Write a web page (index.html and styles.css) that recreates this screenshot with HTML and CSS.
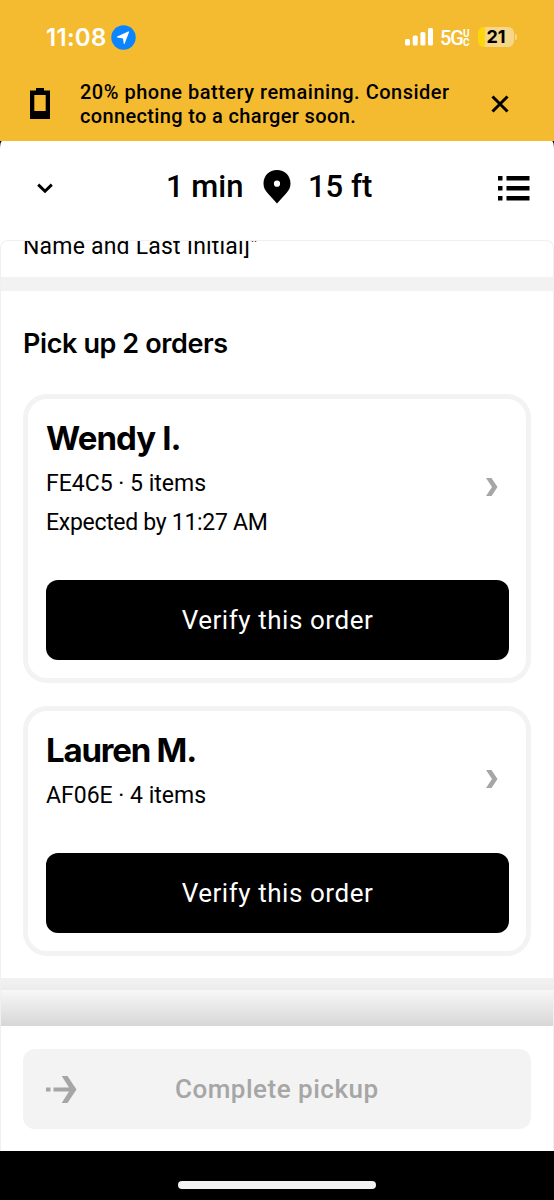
FILE: index.html
```
<!DOCTYPE html>
<html lang="en">
<head>
  <meta charset="UTF-8">
  <meta name="viewport" content="width=device-width, initial-scale=1.0">
  <title>Pick up orders</title>
  <link rel="stylesheet" href="styles.css">
</head>
<body>
  <div class="phone">
    <div class="banner">
      <div class="status-bar">
        <span class="time">11:08</span>
        <svg class="location" width="25" height="25" viewBox="0 0 25 25">
          <circle cx="12.5" cy="12.5" r="12.2" fill="#0a84ff"/>
          <path d="M18.2 6.8 L13.6 18.7 Q13.1 19.5 12.7 18.5 L12 13.4 L6.3 12.6 Q5.2 12.1 6.2 11.5 L17.2 6.6 Q18.2 6.2 18.2 6.8Z" fill="#fff"/>
        </svg>
        <svg class="signal" width="28" height="18" viewBox="0 0 28 18">
          <rect x="0" y="11" width="5" height="6.5" rx="1.5"/>
          <rect x="7.7" y="7.5" width="5" height="10" rx="1.5"/>
          <rect x="15.4" y="4" width="5" height="13.5" rx="1.5"/>
          <rect x="23" y="0" width="5" height="17.5" rx="1.5"/>
        </svg>
        <span class="network">5G</span>
        <span class="network-uc"><span>U</span><span>C</span></span>
        <span class="battery">21</span>
        <span class="battery-tip"></span>
      </div>
      <div class="alert">
        <svg class="alert-icon" width="20" height="31" viewBox="0 0 20 31">
          <path fill-rule="evenodd" d="M6 0 H14 V2.5 H20 V31 H0 V2.5 H6Z M4.3 7 V23 H15.7 V7Z"/>
        </svg>
        <p class="alert-text">20% phone battery remaining. Consider<br><span class="alert-action">connecting to a charger soon.</span></p>
        <svg class="alert-close" width="18" height="18" viewBox="0 0 18 18">
          <path d="M1.5 1.5 L16.5 16.5 M16.5 1.5 L1.5 16.5" stroke="#000" stroke-width="2.9"/>
        </svg>
      </div>
    </div>

    <div class="header-wrap">
      <div class="header">
        <svg class="chevron-down" width="16" height="11" viewBox="0 0 16 11">
          <path d="M1.2 1.6 L8 8.2 L14.8 1.6" fill="none" stroke="#000" stroke-width="2.9"/>
        </svg>
        <div class="trip">
          <span class="trip-time">1 min</span>
          <svg class="pin" width="28" height="34" viewBox="0 0 28 34">
            <path fill-rule="evenodd" d="M14 0 C21.8 0 27.5 5.8 27.5 13.5 C27.5 17.3 26 20.3 23.5 22.9 L14 33.5 L4.5 22.9 C2 20.3 .5 17.3 .5 13.5 C.5 5.8 6.2 0 14 0Z M14 10.6 A3.1 3.1 0 1 0 14 16.8 A3.1 3.1 0 1 0 14 10.6Z"/>
          </svg>
          <span class="trip-distance">15 ft</span>
        </div>
        <svg class="list-icon" width="32" height="25" viewBox="0 0 32 25">
          <path d="M0 0H4.5V4.5H0Z M8.5 0H31.5V4.5H8.5Z M0 10H4.5V14.5H0Z M8.5 10H31.5V14.5H8.5Z M0 20H4.5V24.5H0Z M8.5 20H31.5V24.5H8.5Z"/>
        </svg>
      </div>
    </div>

    <div class="sheet">
      <div class="note"><p>Name and Last Initial]"</p></div>
      <div class="divider"></div>
      <h1>Pick up 2 orders</h1>

      <div class="order">
        <div class="order-info">
          <div>
            <h2>Wendy I.</h2>
            <p class="items">FE4C5 · 5 items</p>
            <p class="expected">Expected by 11:27 AM</p>
          </div>
          <svg class="chevron-right" width="12" height="18" viewBox="0 0 12 18">
            <path d="M0 0 H5.5 L11.5 9 L5.5 18 H0 L6 9Z" fill="#a6a6a6"/>
          </svg>
        </div>
        <button class="verify">Verify this order</button>
      </div>

      <div class="order short">
        <div class="order-info">
          <div>
            <h2>Lauren M.</h2>
            <p class="items">AF06E · 4 items</p>
          </div>
          <svg class="chevron-right" width="12" height="18" viewBox="0 0 12 18">
            <path d="M0 0 H5.5 L11.5 9 L5.5 18 H0 L6 9Z" fill="#a6a6a6"/>
          </svg>
        </div>
        <button class="verify">Verify this order</button>
      </div>

      <div class="section-end"></div>
      <div class="fade"></div>
    </div>

    <div class="footer">
      <button class="complete">
        <svg class="arrow" width="31" height="27" viewBox="0 0 31 27">
          <path d="M0 11.5 H4.5 V15.5 H0Z M7.5 11.5 H23 L15.7 0 H21.5 L30.5 13.5 L21.5 27 H15.7 L23 15.5 H7.5Z" fill="#a6a6a6"/>
        </svg>
        <span>Complete pickup</span>
      </button>
    </div>

    <div class="home"><div class="home-bar"></div></div>
  </div>
</body>
</html>
```
FILE: styles.css
```
* {
  box-sizing: border-box;
}

body {
  margin: 0;
  background: #000;
  font-family: Roboto, "Liberation Sans", sans-serif;
  color: #000;
}

h1, h2, p {
  margin: 0;
  white-space: nowrap;
}

button {
  border: 0;
  font-family: inherit;
}

svg {
  display: block;
  flex: none;
}

.phone {
  width: 554px;
  height: 1200px;
  overflow: hidden;
  background: #fff;
}

/* yellow status area and battery warning */
.banner {
  height: 141px;
  background: #f5bb30;
}

.status-bar {
  display: flex;
  align-items: center;
  height: 74px;
  padding-left: 46px;
  color: #fff;
  font-family: Inter, sans-serif;
}

.time {
  width: 65px;
  font-size: 24px;
  font-weight: 600;
  letter-spacing: 0.3px;
}

.signal {
  margin-left: 269px;
  fill: #fff;
}

.network {
  width: 23px;
  margin-left: 7px;
  font-family: Roboto, sans-serif;
  font-size: 20px;
  font-weight: 500;
  letter-spacing: -1px;
  margin-top: 2px;
}

.network-uc {
  display: flex;
  flex-direction: column;
  width: 8px;
  margin-top: 1px;
  font-family: Roboto, sans-serif;
  font-size: 10px;
  line-height: 9px;
  font-weight: 700;
}

.battery {
  width: 36px;
  height: 20px;
  margin-left: 7px;
  border-radius: 6px;
  background: linear-gradient(90deg, #ffd60a 7px, #f6d688 7px);
  color: #000;
  font-size: 18px;
  font-weight: 700;
  line-height: 20px;
  text-align: center;
}

.battery-tip {
  width: 2px;
  height: 6px;
  margin-left: 1px;
  border-radius: 0 2px 2px 0;
  background: #f6d688;
}

.alert {
  display: flex;
  padding: 6px 45px 0 30px;
}

.alert-icon {
  margin-top: 8px;
}

.alert-text {
  flex: 1;
  margin-left: 30px;
  font-size: 20px;
  line-height: 24px;
  font-weight: 500;
  letter-spacing: 0.5px;
}

.alert-action {
  letter-spacing: 0.35px;
}

.alert-close {
  margin-top: 15px;
}

.header-wrap {
  background: #000;
}

.header {
  display: grid;
  grid-template-columns: 129px 1fr 32px;
  height: 99px;
  padding: 0 24px 0 37px;
  background: #fff;
  border-radius: 2px 2px 0 0 / 8px 8px 0 0;
}

.chevron-down {
  margin-top: 42px;
}

.trip {
  display: flex;
  font-size: 31px;
  line-height: 40px;
  font-weight: 500;
  padding-top: 26px;
}

.trip-time {
  width: 97px;
}

.pin {
  margin-top: 3px;
}

.trip-distance {
  margin-left: 17px;
}

.list-icon {
  margin-top: 35px;
}

.sheet {
  height: 786px;
  background: #fff;
  border: 1px solid #f0f0f0;
  border-bottom: 0;
  border-radius: 8px 8px 0 0;
}

/* end of the scrolled pickup note */
.note {
  height: 36px;
  padding-left: 22px;
  overflow: hidden;
}

.note p {
  margin-top: -9px;
  font-size: 23px;
  line-height: 30px;
  letter-spacing: 0.2px;
}

.divider {
  height: 14px;
  background: #f2f2f2;
}

h1 {
  margin: 34px 0 0 22px;
  font-family: Inter, sans-serif;
  font-size: 27px;
  line-height: 38px;
  font-weight: 600;
  letter-spacing: -0.4px;
}

.order {
  height: 289px;
  margin: 31px 22px 0 22px;
  padding: 17px 17px 18px 18px;
  border: 5px solid #f3f3f3;
  border-radius: 24px;
  display: flex;
  flex-direction: column;
  justify-content: space-between;
}

.order.short {
  height: 250px;
  margin-top: 23px;
}

.order-info {
  display: flex;
  justify-content: space-between;
}

h2 {
  font-family: Inter, sans-serif;
  font-size: 33px;
  line-height: 44px;
  font-weight: 650;
  letter-spacing: -0.9px;
}

.short h2 {
  letter-spacing: -1.2px;
}

.items,
.expected {
  font-size: 23px;
  line-height: 39px;
}

.items {
  margin-top: 4px;
}

.expected {
  letter-spacing: -0.3px;
}

.chevron-right {
  margin: 62px 11px 0 0;
}

.short .chevron-right {
  margin-top: 42px;
}

.verify {
  height: 80px;
  border-radius: 12px;
  background: #000;
  color: #fff;
  font-size: 26px;
  letter-spacing: 0.55px;
}

.section-end {
  height: 12px;
  margin-top: 22px;
  background: linear-gradient(#f2f2f2, #ececec);
}

.fade {
  height: 37px;
  background: linear-gradient(#f7f7f7, #d6d6d6);
}

.footer {
  height: 125px;
  padding: 23px 22px 0;
  background: #fff;
  border: solid #f0f0f0;
  border-width: 0 1px;
}

.complete {
  display: flex;
  align-items: center;
  width: 508px;
  height: 80px;
  padding: 0 0 0 23px;
  border-radius: 12px;
  background: #f3f3f3;
  color: #a6a6a6;
  font-size: 26px;
  font-weight: 500;
  letter-spacing: 0.5px;
}

.complete span {
  margin-left: 98px;
}

.home {
  height: 49px;
  padding-top: 30px;
  background: #000;
}

.home-bar {
  width: 198px;
  height: 8px;
  margin: 0 auto;
  border-radius: 4px;
  background: #f3f3f3;
}
```
